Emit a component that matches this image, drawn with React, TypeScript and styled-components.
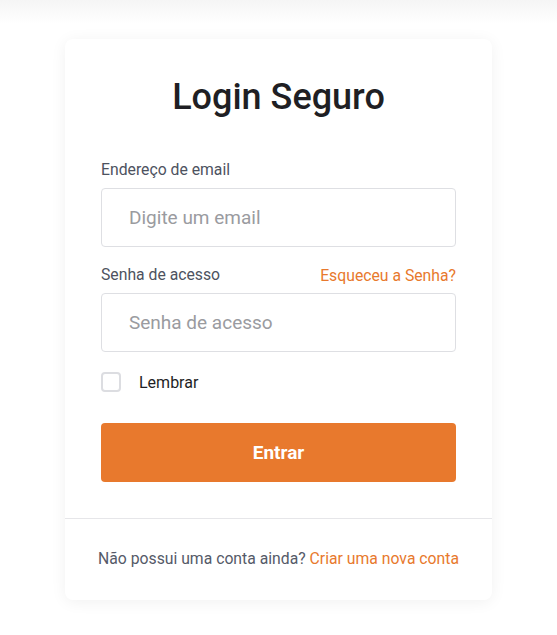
import React from 'react';
import styled, { createGlobalStyle } from 'styled-components';

const GlobalStyle = createGlobalStyle`
  body {
    margin: 0;
    font-family: Roboto, "Liberation Sans", sans-serif;
    background: linear-gradient(#f5f5f5, #ffffff 24px);
    min-height: 635px;
  }
`;

const Page = styled.div`
  display: flex;
  justify-content: center;
  padding-top: 39px;
`;

const Card = styled.div`
  width: 427px;
  background: #fff;
  border-radius: 8px;
  box-shadow: 0 2px 16px rgba(0, 0, 0, 0.06);
`;

const Form = styled.form`
  display: flex;
  flex-direction: column;
  padding: 37px 36px 36px;
`;

const Title = styled.h1`
  margin: 0 0 40px;
  text-align: center;
  font-size: 36px;
  line-height: 43px;
  font-weight: 500;
  color: #1f1f24;
`;

const LabelRow = styled.div`
  display: flex;
  justify-content: space-between;
  align-items: center;
  height: 22px;
  margin-bottom: 7px;
`;

const Label = styled.label`
  font-size: 15.75px;
  line-height: 22px;
  color: #4d5260;
`;

const Link = styled.a`
  color: #e8792d;
  text-decoration: none;
  font-size: 15.75px;
`;

const Input = styled.input`
  box-sizing: border-box;
  width: 100%;
  height: 59px;
  padding: 0 27px;
  border: 1px solid #dedfe3;
  border-radius: 4px;
  font-family: inherit;
  font-size: 19px;
  color: #222;
  outline: none;
  margin-bottom: ${(p: { $gap: number }) => p.$gap}px;
  &::placeholder {
    color: #9a9ba0;
  }
`;

const CheckRow = styled.label`
  display: flex;
  align-items: center;
  gap: 18px;
  height: 20px;
  margin-bottom: 31px;
  font-size: 16px;
  color: #1e1e24;
`;

const Box = styled.span`
  box-sizing: border-box;
  width: 20px;
  height: 20px;
  border: 2px solid #dcdde1;
  border-radius: 4px;
`;

const Button = styled.button`
  height: 59px;
  border: none;
  border-radius: 4px;
  background: #e8792d;
  color: #fff;
  font-family: inherit;
  font-size: 19px;
  font-weight: 700;
  cursor: pointer;
`;

const Footer = styled.div`
  border-top: 1px solid #e6e6e9;
  padding: 28px 0 29px;
  text-align: center;
  font-size: 15.75px;
  line-height: 24px;
  color: #555a68;
`;

export default function App() {
  return (
    <Page>
      <GlobalStyle />
      <Card>
        <Form onSubmit={(e) => e.preventDefault()}>
          <Title>Login Seguro</Title>
          <LabelRow>
            <Label>Endereço de email</Label>
          </LabelRow>
          <Input $gap={17} type="email" placeholder="Digite um email" />
          <LabelRow>
            <Label>Senha de acesso</Label>
            <Link href="#">Esqueceu a Senha?</Link>
          </LabelRow>
          <Input $gap={20} type="password" placeholder="Senha de acesso" />
          <CheckRow>
            <Box />
            Lembrar
          </CheckRow>
          <Button type="submit">Entrar</Button>
        </Form>
        <Footer>
          Não possui uma conta ainda? <Link href="#">Criar uma nova conta</Link>
        </Footer>
      </Card>
    </Page>
  );
}
